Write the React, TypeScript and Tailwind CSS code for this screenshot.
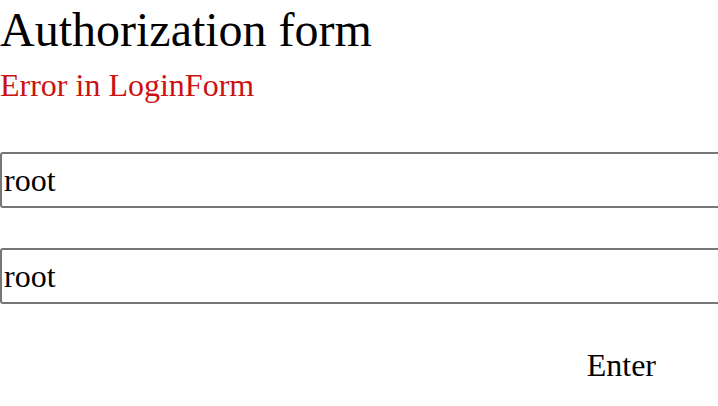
import { useState } from "react";

const App = () => {
  const [login, setLogin] = useState("root");
  const [password, setPassword] = useState("root");

  return (
    <div className="font-['Liberation_Serif',serif] text-black bg-white min-h-[406px] overflow-hidden">
      <h1 className="text-[48px] leading-[60px] m-0">Authorization form</h1>
      <p className="text-[32px] leading-[36px] mt-[7px] text-[#cc1111]">Error in LoginForm</p>

      <form className="flex flex-col mt-[49px]" onSubmit={(e) => e.preventDefault()}>
        <input
          type="text"
          value={login}
          onChange={(e) => setLogin(e.target.value)}
          className="w-[740px] h-[56px] border-2 border-[#767676] rounded-[3px] px-[2px] font-['Liberation_Serif',serif] text-[32px] outline-none"
        />
        <input
          type="text"
          value={password}
          onChange={(e) => setPassword(e.target.value)}
          className="w-[740px] h-[56px] mt-[40px] border-2 border-[#767676] rounded-[3px] px-[2px] font-['Liberation_Serif',serif] text-[32px] outline-none"
        />
        <div className="flex justify-end pr-[62px] mt-[43px]">
          <button type="submit" className="text-[32px] leading-[36px] bg-transparent">
            Enter
          </button>
        </div>
      </form>
    </div>
  );
};

export default App;
